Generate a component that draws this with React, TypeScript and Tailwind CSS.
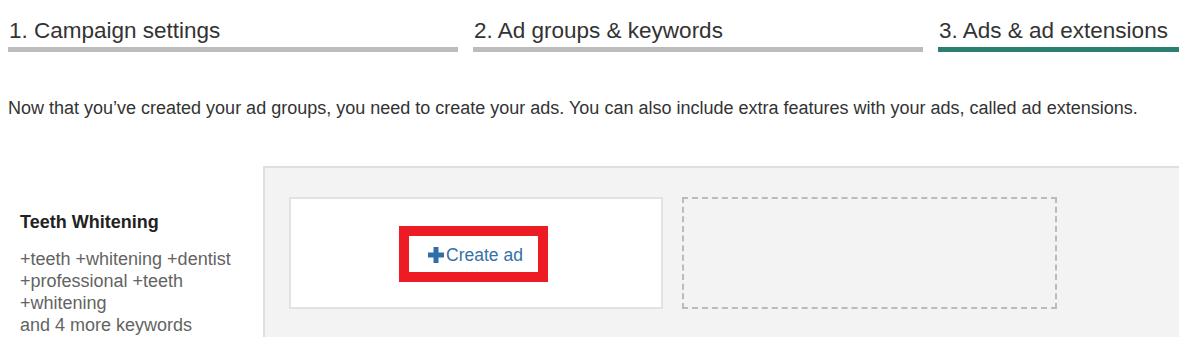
import React from 'react';

const tabs = [
  { label: '1. Campaign settings', active: false },
  { label: '2. Ad groups & keywords', active: false },
  { label: '3. Ads & ad extensions', active: true },
];

function PlusIcon() {
  return (
    <svg width="16" height="16" viewBox="0 0 16 16" className="shrink-0">
      <path d="M5.5 0h5v5.5H16v5h-5.5V16h-5v-5.5H0v-5h5.5z" fill="#2f6ea6" />
    </svg>
  );
}

export default function App() {
  return (
    <div
      className="w-[1179px] h-[353px] overflow-hidden bg-white text-[#333]"
      style={{ fontFamily: '"Liberation Sans", Arial, sans-serif' }}
    >
      <div className="flex gap-[15px] pl-[8px] pt-[18px]">
        {tabs.map((tab) => (
          <div key={tab.label} className="w-[450px] shrink-0">
            <div className="pl-[1px] text-[22.5px] leading-[26px] text-[#333]">{tab.label}</div>
            <div className={`mt-[3px] h-[5px] ${tab.active ? 'bg-[#2a7f6e]' : 'bg-[#bcbcbc]'}`}></div>
          </div>
        ))}
      </div>

      <p className="mt-[45px] pl-[8px] text-[18px] leading-[22px] text-[#333]">
        Now that you’ve created your ad groups, you need to create your ads. You can also include extra features with your ads, called ad extensions.
      </p>

      <div className="mt-[47px] flex">
        <div className="w-[263px] shrink-0 pl-[20px] pt-[45px]">
          <div className="text-[18px] leading-[22px] font-bold text-[#222]">Teeth Whitening</div>
          <div className="mt-[15px] text-[18px] leading-[22px] text-[#636363]">
            <div>+teeth +whitening +dentist</div>
            <div>+professional +teeth</div>
            <div>+whitening</div>
            <div>and 4 more keywords</div>
          </div>
        </div>

        <div className="flex flex-1 gap-[19px] border-t-2 border-l-2 border-[#dfdfdf] bg-[#f3f3f3] pl-[24px] pt-[29px] pb-[28px]">
          <div className="flex h-[112px] w-[374px] shrink-0 items-center justify-center border-2 border-[#e2e2e2] bg-white">
            <div className="-ml-[5px] mt-[2px] flex h-[56px] w-[149px] items-center justify-center border-[10px] border-[#ed1c24] bg-white pl-[4px] pt-[2px]">
              <a className="flex items-center text-[17.5px] leading-[20px] text-[#3571a8]" href="#">
                <PlusIcon />
                <span className="ml-[2px]">Create ad</span>
              </a>
            </div>
          </div>
          <div className="h-[112px] w-[375px] shrink-0 border-2 border-dashed border-[#bbbbbb]"></div>
        </div>
      </div>
    </div>
  );
}
